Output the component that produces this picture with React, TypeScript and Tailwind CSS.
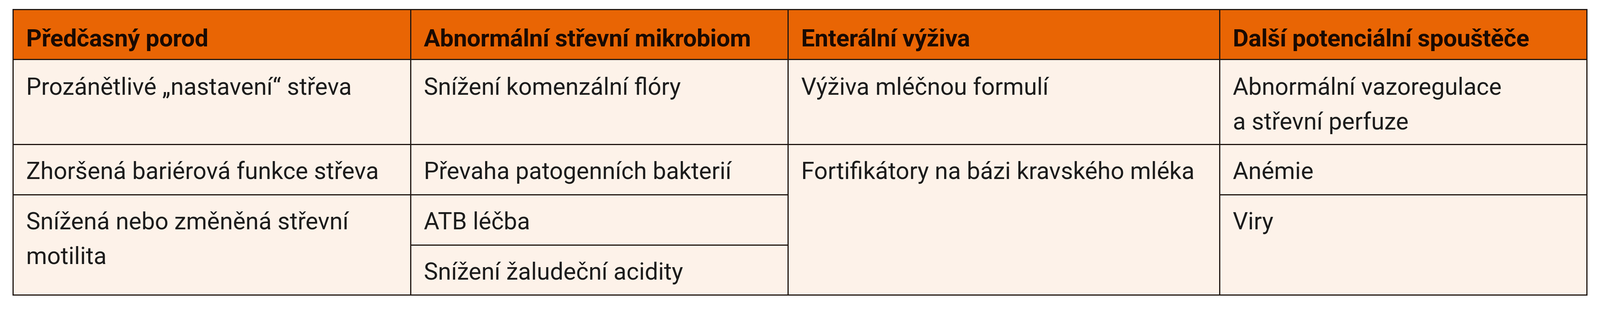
const HEAD = [
  'Předčasný porod',
  'Abnormální střevní mikrobiom',
  'Enterální výživa',
  'Další potenciální spouštěče',
];

function Th({ children }: { children: React.ReactNode }) {
  return (
    <div className="border-r-[3px] border-b-[3px] border-[#1f1611] bg-[#e96504] pl-8 pt-[27px] text-[62px] font-bold leading-[89px] tracking-[-0.005em] text-[#1a0a02]">
      {children}
    </div>
  );
}

function Td({ children, className = '' }: { children: React.ReactNode; className?: string }) {
  return (
    <div
      className={`border-r-[3px] border-b-[3px] border-[#1f1611] bg-[#fdf2e9] pl-8 pt-[22px] text-[61px] leading-[89px] text-[#1c1c1c] ${className}`}
    >
      {children}
    </div>
  );
}

export default function App() {
  return (
    <div className="min-h-[800px] w-[4098px] bg-white pl-[32px] pt-[23px] font-['Roboto',sans-serif]">
      <div
        role="table"
        className="grid w-max grid-cols-[1018px_966px_1105px_940px] grid-rows-[128px_218px_129px_129px_128px] border-t-[3px] border-l-[3px] border-[#1f1611]"
      >
        {HEAD.map((h) => (
          <Th key={h}>{h}</Th>
        ))}

        <Td className="pt-[24px]">Prozánětlivé „nastavení“ střeva</Td>
        <Td className="pt-[24px]">Snížení komenzální flóry</Td>
        <Td className="pt-[24px]">Výživa mléčnou formulí</Td>
        <Td className="pt-[24px]">
          Abnormální vazoregulace
          <br />a střevní perfuze
        </Td>

        <Td>Zhoršená bariérová funkce střeva</Td>
        <Td>Převaha patogenních bakterií</Td>
        <Td className="row-span-3">Fortifikátory na bázi kravského mléka</Td>
        <Td>Anémie</Td>

        <Td className="row-span-2">
          Snížená nebo změněná střevní
          <br />
          motilita
        </Td>
        <Td>ATB léčba</Td>
        <Td className="row-span-2">Viry</Td>

        <Td className="pt-[20px]">Snížení žaludeční acidity</Td>
      </div>
    </div>
  );
}
